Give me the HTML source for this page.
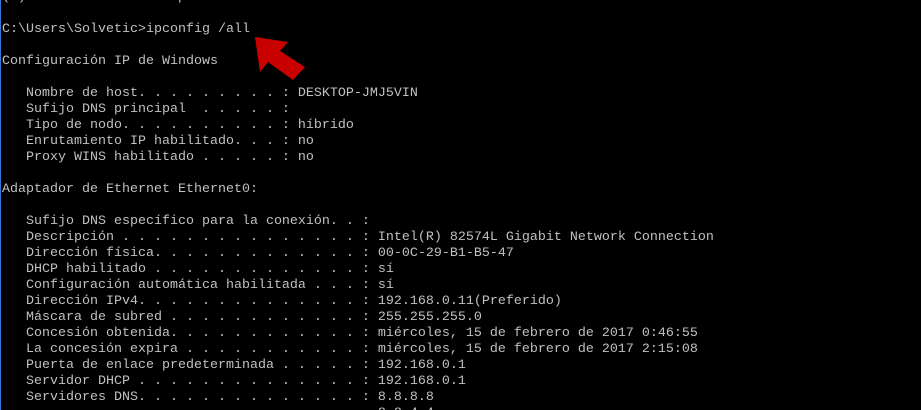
<!DOCTYPE html>
<html><head><meta charset="utf-8"><style>
html,body{margin:0;padding:0;width:921px;height:410px;overflow:hidden;background:#000;}
body{position:relative;}
.b{position:absolute;left:0;top:0;width:1px;height:410px;background:#2a7bd4;}
pre{position:absolute;left:2px;top:-10px;margin:0;font-family:"Liberation Mono",monospace;font-size:13.33px;line-height:16px;color:#c0c0c0;white-space:pre;}
svg{position:absolute;left:0;top:0;}
</style></head><body>
<div class="b"></div>
<pre>(c) 2016 Microsoft Corporation. Todos los derechos reservados.

C:\Users\Solvetic>ipconfig /all

Configuración IP de Windows

   Nombre de host. . . . . . . . . : DESKTOP-JMJ5VIN
   Sufijo DNS principal  . . . . . :
   Tipo de nodo. . . . . . . . . . : híbrido
   Enrutamiento IP habilitado. . . : no
   Proxy WINS habilitado . . . . . : no

Adaptador de Ethernet Ethernet0:

   Sufijo DNS específico para la conexión. . :
   Descripción . . . . . . . . . . . . . . . : Intel(R) 82574L Gigabit Network Connection
   Dirección física. . . . . . . . . . . . . : 00-0C-29-B1-B5-47
   DHCP habilitado . . . . . . . . . . . . . : sí
   Configuración automática habilitada . . . : sí
   Dirección IPv4. . . . . . . . . . . . . . : 192.168.0.11(Preferido)
   Máscara de subred . . . . . . . . . . . . : 255.255.255.0
   Concesión obtenida. . . . . . . . . . . . : miércoles, 15 de febrero de 2017 0:46:55
   La concesión expira . . . . . . . . . . . : miércoles, 15 de febrero de 2017 2:15:08
   Puerta de enlace predeterminada . . . . . : 192.168.0.1
   Servidor DHCP . . . . . . . . . . . . . . : 192.168.0.1
   Servidores DNS. . . . . . . . . . . . . . : 8.8.8.8
                                               8.8.4.4</pre>
<svg width="921" height="410"><polygon points="255,37 288,42 280,51 305,67 293,80 268,62 260,72" fill="#c80000"/></svg>
</body></html>
